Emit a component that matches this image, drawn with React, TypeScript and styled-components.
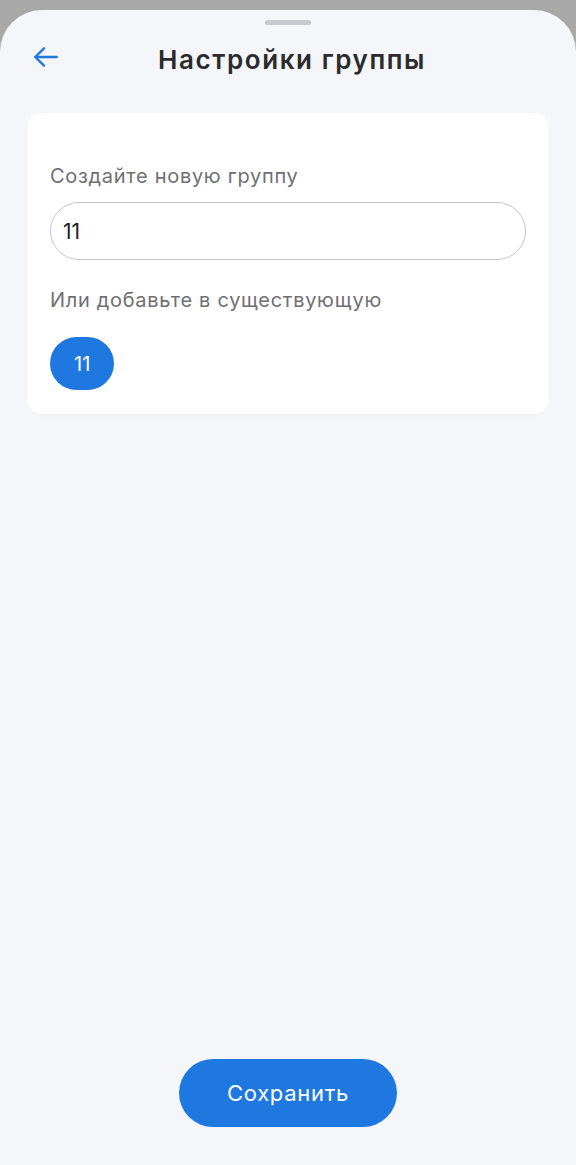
import styled, { createGlobalStyle } from 'styled-components';

const GlobalStyle = createGlobalStyle`
  html, body {
    margin: 0;
    padding: 0;
    background: #a8a8a8;
    font-family: Inter, "Noto Sans", sans-serif;
  }
  * { box-sizing: border-box; }
`;

const Screen = styled.div`
  width: 576px;
  height: 1165px;
  padding-top: 10px;
  background: #a8a8a8;
`;

const Sheet = styled.div`
  height: 1155px;
  background: #f4f6fa;
  border-radius: 42px 42px 0 0;
  display: flex;
  flex-direction: column;
  align-items: center;
  padding: 10px 27px 38px;
`;

const Handle = styled.div`
  width: 46px;
  height: 5px;
  border-radius: 3px;
  background: #c9cacf;
`;

const Header = styled.div`
  width: 100%;
  height: 60px;
  margin-top: 4px;
  display: flex;
  align-items: center;
  justify-content: center;
  position: relative;
`;

const BackButton = styled.button`
  position: absolute;
  left: 0;
  top: 9px;
  width: 38px;
  height: 38px;
  border: 0;
  background: none;
  padding: 0;
  display: flex;
  align-items: center;
  justify-content: center;
`;

const Title = styled.h1`
  margin: 0 0 0 8px;
  font-size: 26px;
  font-weight: 600;
  color: #2b2b2d;
  letter-spacing: 1.6px;
`;

const Card = styled.div`
  width: 100%;
  margin-top: 24px;
  background: #ffffff;
  border-radius: 14px;
  padding: 49px 23px 24px;
  display: flex;
  flex-direction: column;
  box-shadow: 0 1px 4px rgba(0, 0, 0, 0.03);
`;

const Label = styled.div`
  font-size: 20px;
  color: #6f6f73;
  line-height: 28px;
  letter-spacing: 0.7px;
`;

const Input = styled.div`
  margin-top: 12px;
  height: 58px;
  border: 1.5px solid #c6c6c8;
  border-radius: 29px;
  display: flex;
  align-items: center;
  padding-left: 12px;
  font-size: 21px;
  color: #222;
  margin-bottom: 26px;
`;

const Chips = styled.div`
  margin-top: 23px;
  display: flex;
  gap: 10px;
`;

const Chip = styled.div`
  height: 53px;
  padding: 0 24px;
  border-radius: 27px;
  background: #1f78e0;
  color: #ffffff;
  font-size: 20px;
  display: flex;
  align-items: center;
`;

const Spacer = styled.div`
  flex: 1;
`;

const SaveButton = styled.button`
  width: 218px;
  height: 68px;
  border: 0;
  border-radius: 34px;
  background: #1f78e0;
  color: #ffffff;
  font-family: Inter, "Noto Sans", sans-serif;
  font-size: 22px;
  font-weight: 400;
  letter-spacing: 0.7px;
`;

export default function App() {
  return (
    <Screen>
      <GlobalStyle />
      <Sheet>
        <Handle />
        <Header>
          <BackButton>
            <svg width="32" height="32" viewBox="0 0 24 24" fill="none" stroke="#1f78e0" strokeWidth="1.8" strokeLinecap="round" strokeLinejoin="round">
              <path d="M20 12H4" />
              <path d="M10.5 5.5L4 12l6.5 6.5" />
            </svg>
          </BackButton>
          <Title>Настройки группы</Title>
        </Header>
        <Card>
          <Label>Создайте новую группу</Label>
          <Input>11</Input>
          <Label>Или добавьте в существующую</Label>
          <Chips>
            <Chip>11</Chip>
          </Chips>
        </Card>
        <Spacer />
        <SaveButton>Сохранить</SaveButton>
      </Sheet>
    </Screen>
  );
}
